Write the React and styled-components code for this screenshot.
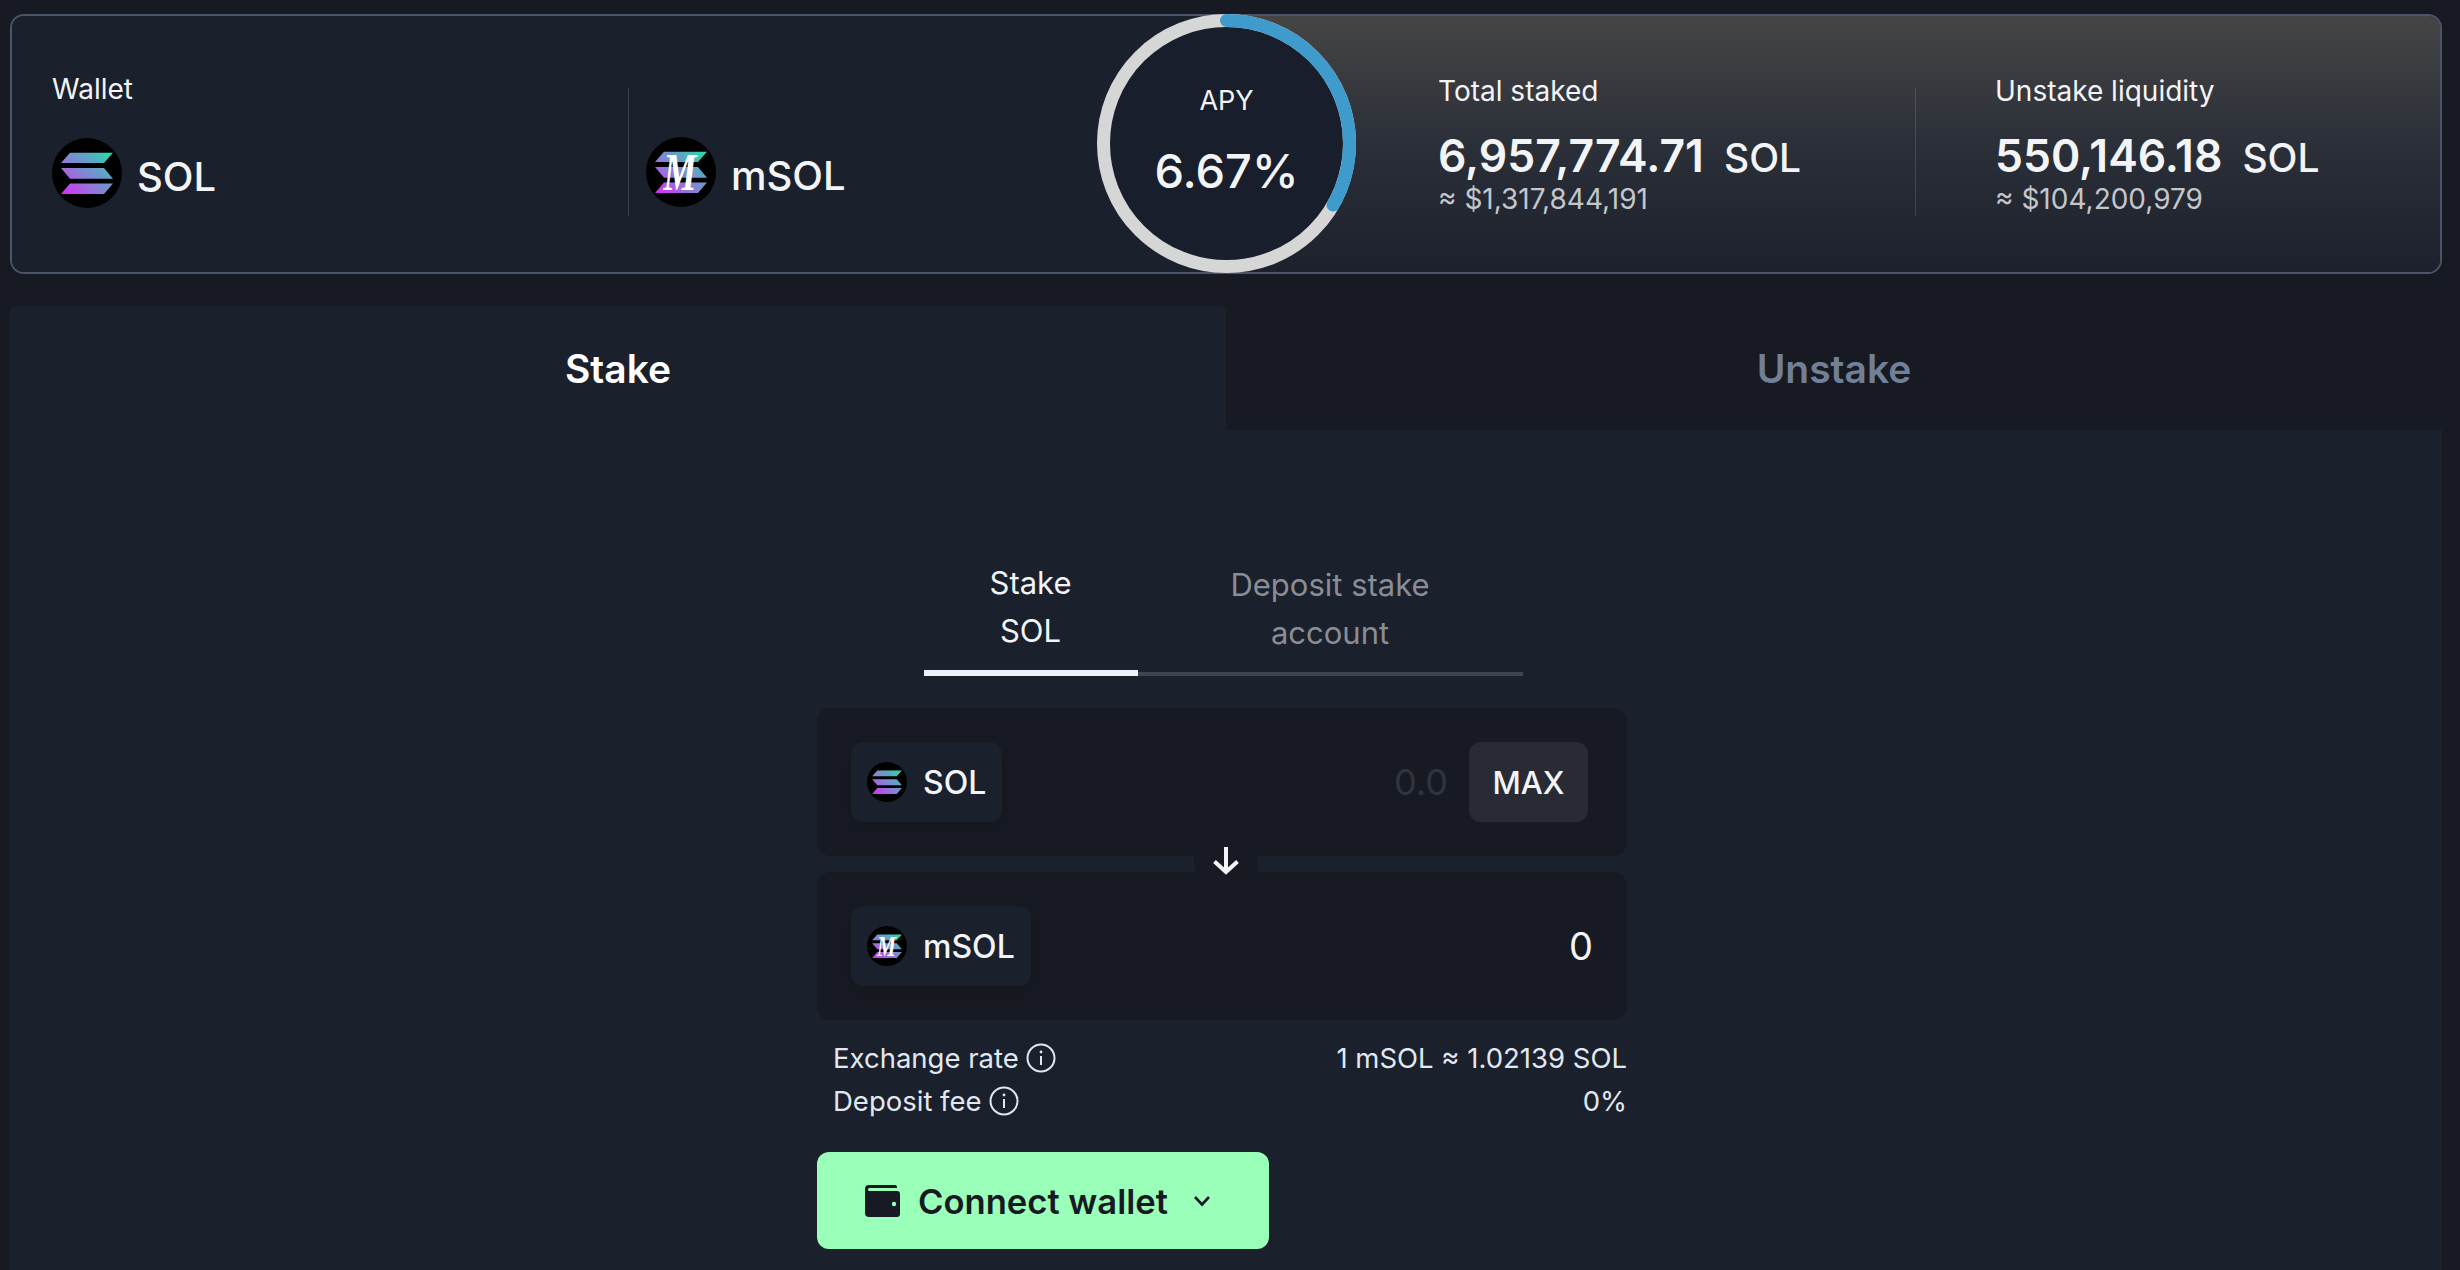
import React from 'react';
import styled, { createGlobalStyle } from 'styled-components';

const colors = {
  page: '#171a23',
  panel: '#1a202c',
  well: '#171a22',
  white: '#f2f4f7',
  line: '#333946',
  border: '#4a5568',
  green: '#9affb8',
  ink: '#171a23',
};

const GlobalStyle = createGlobalStyle`
  html, body {
    margin: 0;
    padding: 0;
    height: 100%;
    overflow: hidden;
    background: ${colors.page};
  }
  * { box-sizing: border-box; }
  #root {
    font-family: Inter, "Noto Sans", sans-serif;
    color: ${colors.white};
  }
`;

const Page = styled.div`
  height: 1270px;
  padding: 14px 18px 0 10px;
  display: flex;
  flex-direction: column;
`;

const Header = styled.header`
  position: relative;
  height: 260px;
  flex: none;
  display: grid;
  grid-template-columns: 1214px 1fr;
  border: 2px solid ${colors.border};
  border-radius: 14px;
`;

const HalfLeft = styled.div`
  display: flex;
  background: ${colors.panel};
  padding: 72px 0 0 40px;
  border-radius: 12px 0 0 12px;
`;

const HalfRight = styled.div`
  display: flex;
  padding: 72px 0 0 212px;
  background: linear-gradient(180deg, #454545 0%, #2b2f38 50%, #1c212d 100%);
  border-radius: 0 12px 12px 0;
`;

const StatColumn = styled.div`
  height: 128px;
  width: ${(p) => p.$width}px;
  flex: none;
  border-right: ${(p) => (p.$divider ? '1.5px solid rgba(113, 128, 150, 0.35)' : 'none')};
  padding-left: ${(p) => p.$inset || 0}px;
`;

const StatLabel = styled.div`
  font-size: 28px;
  line-height: 32px;
  height: 32px;
  margin-top: ${(p) => p.$top}px;
`;

const TokenRow = styled.div`
  display: flex;
  align-items: center;
  gap: 15px;
  font-size: 40px;
  font-weight: 500;
  height: 70px;
  margin-top: ${(p) => p.$top}px;
`;

const TokenText = styled.span`
  position: relative;
  top: 3px;
`;

const BigValue = styled.div`
  display: flex;
  align-items: baseline;
  gap: 20px;
  font-size: 44.5px;
  font-weight: 600;
  line-height: 50px;
  margin-top: 24px;
`;

const BigUnit = styled.span`
  font-size: 39px;
  font-weight: 500;
`;

const SubValue = styled.div`
  font-size: 28px;
  line-height: 32px;
  margin-top: 0;
  color: #c3c6cb;
`;

const ApyRing = styled.div`
  position: absolute;
  left: 1085px;
  top: -2px;
  width: 259px;
  height: 259px;
  display: flex;
  flex-direction: column;
  align-items: center;
`;

const RingSvg = styled.svg`
  position: absolute;
  inset: 0;
`;

const ApyLabel = styled.div`
  position: relative;
  font-size: 27px;
  line-height: 32px;
  margin-top: 71px;
`;

const ApyValue = styled.div`
  position: relative;
  font-size: 47px;
  font-weight: 500;
  line-height: 56px;
  margin-top: 26px;
`;

const TabBar = styled.div`
  display: grid;
  grid-template-columns: 1fr 1fr;
  height: 124px;
  margin-top: 32px;
  flex: none;
`;

const BigTab = styled.div`
  display: flex;
  align-items: center;
  justify-content: center;
  font-size: 39px;
  font-weight: 600;
  background: ${(p) => (p.$active ? colors.panel : 'transparent')};
  color: ${(p) => (p.$active ? '#ffffff' : '#718096')};
  border-radius: 6px 6px 0 0;
`;

const Panel = styled.main`
  flex: 1;
  background: ${colors.panel};
  padding: 129px 8px 0 0;
  display: flex;
  justify-content: center;
`;

const Form = styled.div`
  width: 810px;
  display: flex;
  flex-direction: column;
`;

const SubTabs = styled.div`
  align-self: center;
  display: flex;
  align-items: flex-end;
  margin-left: 2px;
`;

const SubTab = styled.div`
  width: ${(p) => p.$width}px;
  text-align: center;
  font-size: 31px;
  line-height: 48px;
  padding-bottom: 15px;
  color: ${(p) => (p.$active ? colors.white : '#8a8d95')};
  border-bottom: ${(p) => (p.$active ? `6px solid #edf2f7` : `4px solid #41444f`)};
`;

const Well = styled.div`
  position: relative;
  height: 148px;
  margin-top: ${(p) => p.$top}px;
  padding: 34px 39px 34px 34px;
  background: ${colors.well};
  border-radius: 14px;
  display: flex;
  align-items: center;
  justify-content: space-between;
`;

const TokenChip = styled.div`
  height: 80px;
  display: flex;
  align-items: center;
  gap: 16px;
  padding: 0 16px;
  background: ${colors.panel};
  border-radius: 12px;
  font-size: 32px;
  font-weight: 500;
  box-shadow: 0 6px 16px rgba(0, 0, 0, 0.12);
`;

const AmountGroup = styled.div`
  display: flex;
  align-items: center;
  gap: 21px;
  margin-right: ${(p) => (p.$flush ? -5 : 0)}px;
`;

const Placeholder = styled.span`
  font-size: 36px;
  color: #30343d;
`;

const Amount = styled.span`
  font-size: 38px;
  color: ${colors.white};
`;

const MaxButton = styled.div`
  width: 119px;
  height: 80px;
  display: flex;
  align-items: center;
  justify-content: center;
  background: #282b34;
  border-radius: 12px;
  font-size: 31px;
  font-weight: 500;
`;

const SwapNotch = styled.div`
  position: absolute;
  left: 50%;
  top: -27px;
  width: 64px;
  height: 32px;
  margin-left: -28px;
  display: flex;
  justify-content: center;
  background: ${colors.well};
  border-radius: 0 0 12px 12px;
`;

const InfoList = styled.div`
  margin-top: 17px;
  padding-left: 16px;
`;

const InfoRow = styled.div`
  display: flex;
  justify-content: space-between;
  align-items: center;
  height: 42.5px;
  font-size: 27.5px;
  color: #e2e8f0;
`;

const InfoLabel = styled.span`
  display: flex;
  align-items: center;
  gap: 7px;
`;

const ConnectButton = styled.button`
  width: 452px;
  height: 97px;
  margin-top: 30px;
  padding: 0 0 0 48px;
  border: none;
  border-radius: 12px;
  background: ${colors.green};
  color: ${colors.ink};
  font-family: inherit;
  font-size: 34.6px;
  font-weight: 600;
  display: flex;
  align-items: center;
`;

const ButtonLabel = styled.span`
  margin-left: 17px;
  margin-right: 25px;
`;

const SolBars = () => (
  <>
    <defs>
      <linearGradient id="solGrad" gradientUnits="userSpaceOnUse" x1="14" y1="60" x2="56" y2="10">
        <stop offset="0" stopColor="#d92bf8" />
        <stop offset="0.4" stopColor="#8f7bd8" />
        <stop offset="0.7" stopColor="#5aa8c4" />
        <stop offset="1" stopColor="#1fe6a6" />
      </linearGradient>
    </defs>
    <polygon points="9,25 18,14.7 61,14.7 52,25" fill="url(#solGrad)" />
    <polygon points="9,30 52,30 61,40.7 18,40.7" fill="url(#solGrad)" />
    <polygon points="9,56 18,45.5 61,45.5 52,56" fill="url(#solGrad)" />
  </>
);

const TokenIcon = ({ size, mono }) => (
  <svg width={size} height={size} viewBox="0 0 70 70" style={{ flex: 'none' }}>
    <circle cx="35" cy="35" r="35" fill="#000" />
    <SolBars />
    {mono && (
      <text
        transform="translate(34 53) scale(0.7 1)"
        textAnchor="middle"
        fontFamily="Liberation Serif, serif"
        fontStyle="italic"
        fontWeight="700"
        fontSize="53"
        fill="#fff"
      >
        M
      </text>
    )}
  </svg>
);

const InfoIcon = () => (
  <svg width="30" height="30" viewBox="0 0 30 30" fill="none" stroke="#e2e8f0" strokeWidth="2">
    <circle cx="15" cy="15" r="13.5" />
    <line x1="15" y1="13" x2="15" y2="22" />
    <circle cx="15" cy="9" r="1.4" fill="#e2e8f0" stroke="none" />
  </svg>
);

const WalletIcon = () => (
  <svg width="36" height="32" viewBox="0 0 36 32">
    <path
      d="M4 0h26a2 2 0 0 1 2 2v1H4.5a1.5 1.5 0 0 0 0 3H32a3 3 0 0 1 3 3v20a3 3 0 0 1-3 3H4a4 4 0 0 1-4-4V4a4 4 0 0 1 4-4z"
      fill="#171a23"
      fillRule="evenodd"
    />
    <circle cx="29" cy="19" r="2.2" fill="#9affb8" />
  </svg>
);

const Chevron = () => (
  <svg width="18" height="12" viewBox="0 0 18 12" fill="none" stroke="#171a23" strokeWidth="2.6">
    <path d="M2 2l7 7.5L16 2" />
  </svg>
);

const DownArrow = () => (
  <svg width="30" height="30" viewBox="0 0 30 30" fill="none" stroke="#f2f4f7" strokeWidth="4">
    <path d="M15 2v25M3.5 16.5L15 27l11.5-10.5" />
  </svg>
);

const App = () => (
  <Page>
    <GlobalStyle />
    <Header>
      <HalfLeft>
        <StatColumn $width={577} $divider>
          <StatLabel $top={-15}>Wallet</StatLabel>
          <TokenRow $top={33}>
            <TokenIcon size={70} />
            <TokenText>SOL</TokenText>
          </TokenRow>
        </StatColumn>
        <StatColumn $width={400} $inset={17}>
          <TokenRow $top={49}>
            <TokenIcon size={70} mono />
            <TokenText>mSOL</TokenText>
          </TokenRow>
        </StatColumn>
      </HalfLeft>
      <HalfRight>
        <StatColumn $width={478} $divider>
          <StatLabel $top={-13}>Total staked</StatLabel>
          <BigValue>
            6,957,774.71 <BigUnit>SOL</BigUnit>
          </BigValue>
          <SubValue>≈ $1,317,844,191</SubValue>
        </StatColumn>
        <StatColumn $width={440} $inset={79}>
          <StatLabel $top={-13}>Unstake liquidity</StatLabel>
          <BigValue>
            550,146.18 <BigUnit>SOL</BigUnit>
          </BigValue>
          <SubValue>≈ $104,200,979</SubValue>
        </StatColumn>
      </HalfRight>
      <ApyRing>
        <RingSvg width="259" height="259" viewBox="0 0 259 259">
          <circle cx="129.5" cy="129.5" r="123" fill="#181e2b" stroke="#d6d6d6" strokeWidth="13" />
          <circle
            cx="129.5"
            cy="129.5"
            r="123"
            fill="none"
            stroke="#3f9bcc"
            strokeWidth="13"
            strokeLinecap="round"
            pathLength="360"
            strokeDasharray="120 360"
            transform="rotate(-90 129.5 129.5)"
          />
        </RingSvg>
        <ApyLabel>APY</ApyLabel>
        <ApyValue>6.67%</ApyValue>
      </ApyRing>
    </Header>
    <TabBar>
      <BigTab $active>Stake</BigTab>
      <BigTab>Unstake</BigTab>
    </TabBar>
    <Panel>
      <Form>
        <SubTabs>
          <SubTab $width={214} $active>
            Stake
            <br />
            SOL
          </SubTab>
          <SubTab $width={385}>
            Deposit stake
            <br />
            account
          </SubTab>
        </SubTabs>
        <Well $top={32}>
          <TokenChip>
            <TokenIcon size={40} />
            SOL
          </TokenChip>
          <AmountGroup>
            <Placeholder>0.0</Placeholder>
            <MaxButton>MAX</MaxButton>
          </AmountGroup>
        </Well>
        <Well $top={16}>
          <SwapNotch>
            <DownArrow />
          </SwapNotch>
          <TokenChip>
            <TokenIcon size={40} mono />
            mSOL
          </TokenChip>
          <AmountGroup $flush>
            <Amount>0</Amount>
          </AmountGroup>
        </Well>
        <InfoList>
          <InfoRow>
            <InfoLabel>
              Exchange rate <InfoIcon />
            </InfoLabel>
            <span>1 mSOL ≈ 1.02139 SOL</span>
          </InfoRow>
          <InfoRow>
            <InfoLabel>
              Deposit fee <InfoIcon />
            </InfoLabel>
            <span>0%</span>
          </InfoRow>
        </InfoList>
        <ConnectButton>
          <WalletIcon />
          <ButtonLabel>Connect wallet</ButtonLabel>
          <Chevron />
        </ConnectButton>
      </Form>
    </Panel>
  </Page>
);

export default App;
